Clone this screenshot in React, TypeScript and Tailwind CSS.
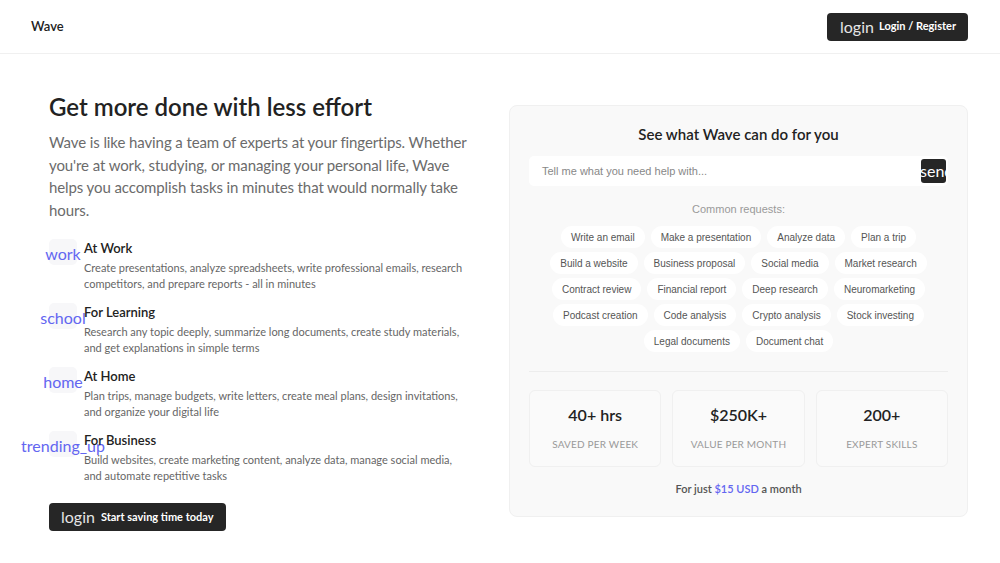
import React from "react";

const features = [
  {
    icon: "work",
    title: "At Work",
    desc: "Create presentations, analyze spreadsheets, write professional emails, research competitors, and prepare reports - all in minutes",
  },
  {
    icon: "school",
    title: "For Learning",
    desc: "Research any topic deeply, summarize long documents, create study materials, and get explanations in simple terms",
  },
  {
    icon: "home",
    title: "At Home",
    desc: "Plan trips, manage budgets, write letters, create meal plans, design invitations, and organize your digital life",
  },
  {
    icon: "trending_up",
    title: "For Business",
    desc: "Build websites, create marketing content, analyze data, manage social media, and automate repetitive tasks",
  },
];

const chipRows = [
  ["Write an email", "Make a presentation", "Analyze data", "Plan a trip"],
  ["Build a website", "Business proposal", "Social media", "Market research"],
  ["Contract review", "Financial report", "Deep research", "Neuromarketing"],
  ["Podcast creation", "Code analysis", "Crypto analysis", "Stock investing"],
  ["Legal documents", "Document chat"],
];

const stats = [
  { value: "40+ hrs", label: "Saved per week" },
  { value: "$250K+", label: "Value per month" },
  { value: "200+", label: "Expert skills" },
];

export default function App() {
  return (
    <div className="min-h-[563px] w-[1000px] bg-white font-['Lato','Open_Sans',sans-serif] text-[#222]">
      <header className="flex h-[54px] items-center justify-between border-b border-[#f0f0f0] pl-[31px] pr-[32px]">
        <div className="text-[13px] font-semibold">Wave</div>
        <button className="flex h-[28px] items-center gap-[5px] rounded-[4px] bg-[#262626] pl-[13px] pr-[12px] text-white">
          <span className="text-[16px] font-normal leading-none text-[#e5e5e5]">login</span>
          <span className="text-[11px] font-bold">Login / Register</span>
        </button>
      </header>

      <main className="flex items-center justify-between pl-[49px] pr-[32px] pt-[37px]">
        <section className="w-[430px]">
          <h1 className="text-[24px] font-semibold leading-[32px] text-[#222]">Get more done with less effort</h1>
          <p className="mt-[8px] w-[425px] text-[15px] leading-[22.5px] tracking-[-0.1px] text-[#6b6b6b]">
            Wave is like having a team of experts at your fingertips. Whether you're at work, studying, or managing
            your personal life, Wave helps you accomplish tasks in minutes that would normally take hours.
          </p>

          <div className="mt-[18px] flex flex-col gap-[11px]">
            {features.map((f) => (
              <div key={f.title} className="flex items-start gap-[7px]">
                <div className="flex h-[26px] w-[28px] shrink-0 items-center justify-center rounded-[5px] bg-[#f7f7f9]">
                  <span className="whitespace-nowrap pt-[4px] text-[16px] leading-none text-[#6366f1]">{f.icon}</span>
                </div>
                <div className="w-[385px]">
                  <div className="text-[13px] font-semibold leading-[18px] text-[#222]">{f.title}</div>
                  <div className="mt-[3px] text-[11px] leading-[16px] text-[#666]">{f.desc}</div>
                </div>
              </div>
            ))}
          </div>

          <button className="mt-[19px] flex h-[28px] items-center gap-[6px] rounded-[4px] bg-[#262626] pl-[12px] pr-[12px] text-white">
            <span className="text-[16px] font-normal leading-none text-[#e5e5e5]">login</span>
            <span className="text-[11px] font-bold">Start saving time today</span>
          </button>
        </section>

        <section className="w-[459px] rounded-[8px] border border-[#f0f0f0] bg-[#f9f9f9] px-[19px] pb-[19px] pt-[18px]">
          <h2 className="text-center text-[15px] font-semibold leading-[20px] text-[#222]">
            See what Wave can do for you
          </h2>
          <div className="mt-[12px] flex h-[30px] items-center rounded-[5px] bg-white pl-[13px] pr-[2px]">
            <span className="flex-1 font-['Liberation_Sans',Arial,sans-serif] text-[11px] text-[#888]">
              Tell me what you need help with...
            </span>
            <div className="flex h-[24px] w-[25px] items-center overflow-hidden rounded-[3px] bg-[#262626]">
              <span className="-ml-[1px] whitespace-nowrap text-[16px] leading-none text-white">send</span>
            </div>
          </div>

          <div className="mt-[15px] text-center font-['Liberation_Sans',Arial,sans-serif] text-[11px] leading-[16px] text-[#9a9a9a]">
            Common requests:
          </div>

          <div className="mt-[9px] flex flex-col items-center gap-[4px]">
            {chipRows.map((row, i) => (
              <div key={i} className="flex gap-[6px]">
                {row.map((c) => (
                  <span
                    key={c}
                    className="flex h-[22px] items-center rounded-full bg-white px-[10px] font-['Liberation_Sans',Arial,sans-serif] text-[10px] text-[#555]"
                  >
                    {c}
                  </span>
                ))}
              </div>
            ))}
          </div>

          <div className="mt-[19px] border-t border-[#ededed]" />

          <div className="mt-[18px] grid grid-cols-3 gap-[11px]">
            {stats.map((s) => (
              <div
                key={s.label}
                className="flex h-[77px] flex-col items-center rounded-[6px] border border-[#f0f0f0] bg-[#fafafa] pt-[13px]"
              >
                <div className="text-[16px] font-semibold leading-[22px] text-[#222]">{s.value}</div>
                <div className="mt-[11px] text-[10px] uppercase leading-[14px] tracking-[0.2px] text-[#999]">
                  {s.label}
                </div>
              </div>
            ))}
          </div>

          <div className="mt-[14px] text-center text-[11px] font-semibold leading-[16px] text-[#555]">
            For just <span className="text-[#6366f1]">$15 USD</span> a month
          </div>
        </section>
      </main>
    </div>
  );
}
